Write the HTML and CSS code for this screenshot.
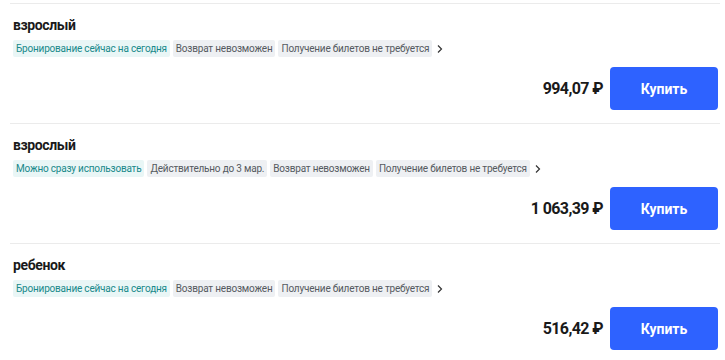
FILE: index.html
```html
<!DOCTYPE html>
<html lang="ru">
<head>
  <meta charset="UTF-8">
  <title>Билеты</title>
  <link rel="stylesheet" href="styles.css">
</head>
<body>
  <div class="tickets">
    <div class="ticket">
      <div class="ticket-title">взрослый</div>
      <div class="tags">
        <span class="tag tag-green">Бронирование сейчас на сегодня</span>
        <span class="tag">Возврат невозможен</span>
        <span class="tag">Получение билетов не требуется</span>
        <svg class="more" width="8" height="10" viewBox="0 0 8 10"><path d="M2 1.5 L5.5 5 L2 8.5" fill="none" stroke="#333" stroke-width="1.2"/></svg>
      </div>
      <div class="buy-row">
        <span class="price">994,07 ₽</span>
        <button class="buy">Купить</button>
      </div>
    </div>

    <div class="ticket">
      <div class="ticket-title">взрослый</div>
      <div class="tags">
        <span class="tag tag-green">Можно сразу использовать</span>
        <span class="tag">Действительно до 3 мар.</span>
        <span class="tag">Возврат невозможен</span>
        <span class="tag">Получение билетов не требуется</span>
        <svg class="more" width="8" height="10" viewBox="0 0 8 10"><path d="M2 1.5 L5.5 5 L2 8.5" fill="none" stroke="#333" stroke-width="1.2"/></svg>
      </div>
      <div class="buy-row">
        <span class="price">1 063,39 ₽</span>
        <button class="buy">Купить</button>
      </div>
    </div>

    <div class="ticket">
      <div class="ticket-title">ребенок</div>
      <div class="tags">
        <span class="tag tag-green">Бронирование сейчас на сегодня</span>
        <span class="tag">Возврат невозможен</span>
        <span class="tag">Получение билетов не требуется</span>
        <svg class="more" width="8" height="10" viewBox="0 0 8 10"><path d="M2 1.5 L5.5 5 L2 8.5" fill="none" stroke="#333" stroke-width="1.2"/></svg>
      </div>
      <div class="buy-row">
        <span class="price">516,42 ₽</span>
        <button class="buy">Купить</button>
      </div>
    </div>
  </div>
</body>
</html>
```

FILE: styles.css
```css
body {
  margin: 0;
  padding-top: 3px;
  background: #fff;
  font-family: Roboto, "Noto Sans", sans-serif;
  color: #1a1a1a;
}

.tickets {
  margin-left: 10px;
  width: 710px;
  border-top: 1px solid #ebebeb;
}

.ticket {
  padding: 12px 2px 13px 3px;
  border-bottom: 1px solid #ebebeb;
}

.ticket-title {
  font-size: 14px;
  font-weight: 700;
  line-height: 18px;
  letter-spacing: -0.4px;
}

.tags {
  display: flex;
  align-items: center;
  gap: 3px;
  margin-top: 6px;
}

.tag {
  background: #eef0f3;
  color: #555a60;
  font-size: 10px;
  letter-spacing: -0.2px;
  line-height: 17px;
  padding: 0 3px;
  border-radius: 2px;
  white-space: nowrap;
}

.tag-green {
  background: #e9f6f6;
  color: #17898a;
}

.more {
  margin-left: 1px;
}

.buy-row {
  display: flex;
  justify-content: flex-end;
  align-items: center;
  gap: 7px;
  margin-top: 10px;
}

.price {
  font-size: 16px;
  font-weight: 700;
  letter-spacing: -0.6px;
}

.buy {
  width: 108px;
  height: 43px;
  border: none;
  border-radius: 4px;
  background: #2e62ff;
  color: #fff;
  font-family: inherit;
  font-size: 14px;
  font-weight: 700;
  cursor: pointer;
}
```
